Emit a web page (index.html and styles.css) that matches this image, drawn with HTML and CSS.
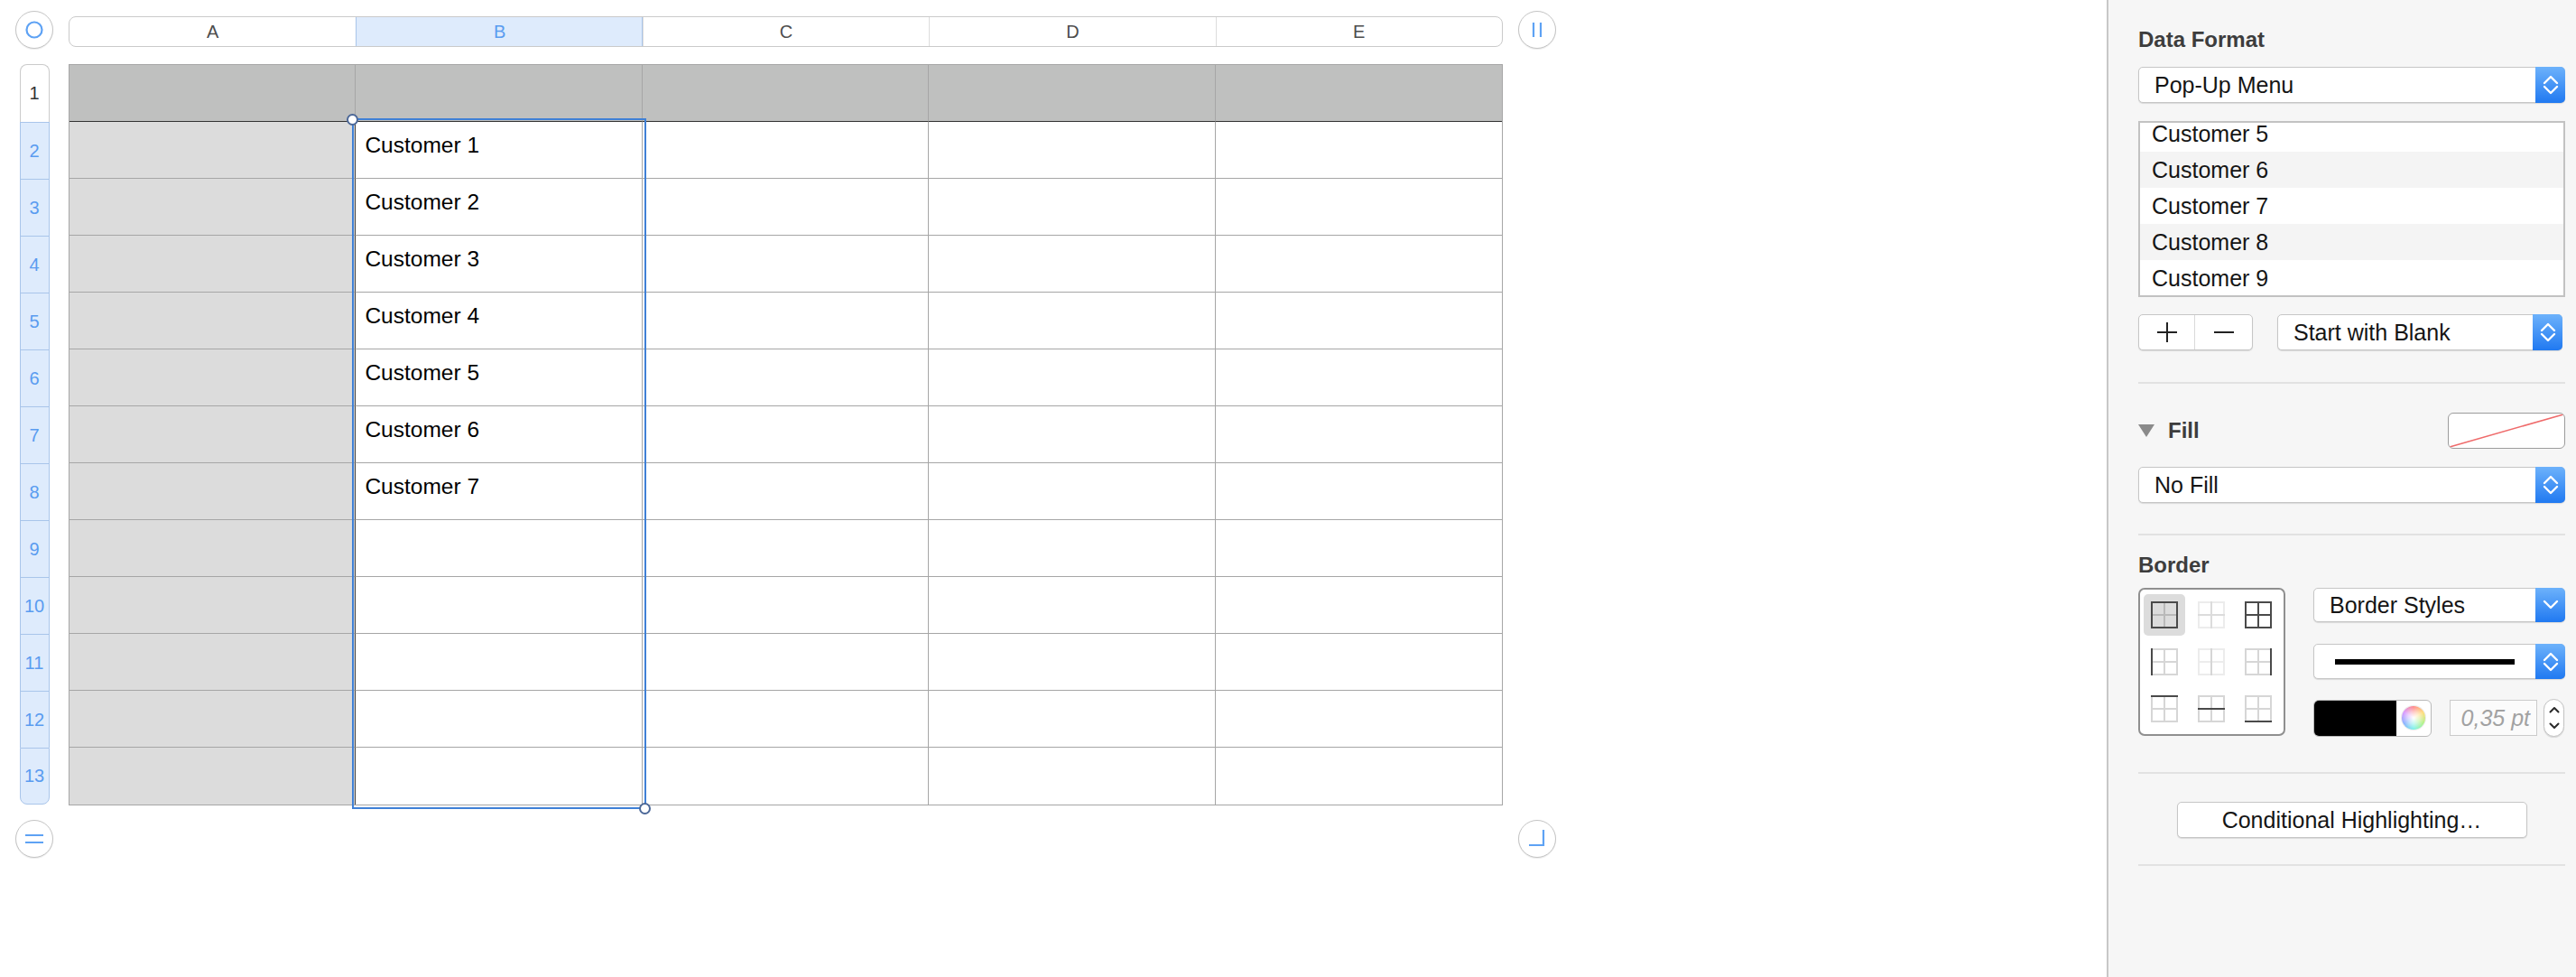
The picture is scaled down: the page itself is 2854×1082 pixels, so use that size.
FILE: index.html
```html
<!DOCTYPE html>
<html>
<head>
    <title>Numbers</title>
    <meta http-equiv="content-type" content="text/html; charset=UTF-8"/>
    <link rel="stylesheet" href="styles.css">
</head>
<body>
<div class="app">
    <div class="sheet">
        <div class="knob">
            <svg width="22" height="22" viewBox="0 0 22 22"><circle cx="11" cy="11" r="8.5" fill="none" stroke="#5ea2f4" stroke-width="2.2"/></svg>
        </div>
        <div class="col_bar">
            <span>A</span><span class="on">B</span><span>C</span><span>D</span><span>E</span>
        </div>
        <div class="knob">
            <svg width="12" height="18" viewBox="0 0 12 18"><path d="M2 1v16M10 1v16" stroke="#5ea2f4" stroke-width="2.2" fill="none"/></svg>
        </div>

        <div class="row_bar">
            <span class="first">1</span><span>2</span><span>3</span><span>4</span><span>5</span><span>6</span><span>7</span><span>8</span><span>9</span><span>10</span><span>11</span><span>12</span><span class="last">13</span>
        </div>
        <div class="table_wrap">
            <div class="table">
                <div class="h"></div><div class="h"></div><div class="h"></div><div class="h"></div><div class="h"></div>
                <div class="a"></div><div>Customer 1</div><div></div><div></div><div></div>
                <div class="a"></div><div>Customer 2</div><div></div><div></div><div></div>
                <div class="a"></div><div>Customer 3</div><div></div><div></div><div></div>
                <div class="a"></div><div>Customer 4</div><div></div><div></div><div></div>
                <div class="a"></div><div>Customer 5</div><div></div><div></div><div></div>
                <div class="a"></div><div>Customer 6</div><div></div><div></div><div></div>
                <div class="a"></div><div>Customer 7</div><div></div><div></div><div></div>
                <div class="a"></div><div></div><div></div><div></div><div></div>
                <div class="a"></div><div></div><div></div><div></div><div></div>
                <div class="a"></div><div></div><div></div><div></div><div></div>
                <div class="a"></div><div></div><div></div><div></div><div></div>
                <div class="a"></div><div></div><div></div><div></div><div></div>
            </div>
            <!-- selected range -->
            <div class="selection">
                <i class="handle tl"></i>
                <i class="handle br"></i>
            </div>
        </div>
        <div></div>

        <div class="knob">
            <svg width="22" height="12" viewBox="0 0 22 12"><path d="M1 2h20M1 10h20" stroke="#5ea2f4" stroke-width="2.2" fill="none"/></svg>
        </div>
        <div></div>
        <div class="knob">
            <svg width="20" height="20" viewBox="0 0 20 20"><path d="M17 0V17H1" stroke="#5ea2f4" stroke-width="2.2" fill="none"/></svg>
        </div>
    </div>

    <div class="inspector">
        <h3 class="title">Data Format</h3>
        <div class="popup top_popup">
            <span>Pop-Up Menu</span>
            <i class="arrows"><svg width="20" height="24" viewBox="0 0 20 24"><path d="M3 10l7-7 7 7M3 14l7 7 7-7" fill="none" stroke="#fff" stroke-width="2.4" stroke-linecap="round" stroke-linejoin="round"/></svg></i>
        </div>
        <div class="list">
            <div class="item cut">Customer 5</div>
            <div class="item odd">Customer 6</div>
            <div class="item">Customer 7</div>
            <div class="item odd">Customer 8</div>
            <div class="item">Customer 9</div>
        </div>
        <div class="list_tools">
            <div class="plus_minus">
                <span><svg width="22" height="22" viewBox="0 0 22 22"><path d="M11 0v22M0 11h22" stroke="#222" stroke-width="2" fill="none"/></svg></span>
                <span><svg width="22" height="22" viewBox="0 0 22 22"><path d="M0 11h22" stroke="#222" stroke-width="2" fill="none"/></svg></span>
            </div>
            <div class="popup blank_popup">
                <span>Start with Blank</span>
                <i class="arrows"><svg width="20" height="24" viewBox="0 0 20 24"><path d="M3 10l7-7 7 7M3 14l7 7 7-7" fill="none" stroke="#fff" stroke-width="2.4" stroke-linecap="round" stroke-linejoin="round"/></svg></i>
            </div>
        </div>

        <div class="sep sep_1"></div>

        <div class="fill_row">
            <i class="disclosure"></i>
            <h3>Fill</h3>
            <div class="swatch">
                <svg width="100%" height="100%" viewBox="0 0 130 40" preserveAspectRatio="none"><path d="M1 39L129 1" stroke="#ef6b6b" stroke-width="1.6" fill="none"/></svg>
            </div>
        </div>
        <div class="popup fill_popup">
            <span>No Fill</span>
            <i class="arrows"><svg width="20" height="24" viewBox="0 0 20 24"><path d="M3 10l7-7 7 7M3 14l7 7 7-7" fill="none" stroke="#fff" stroke-width="2.4" stroke-linecap="round" stroke-linejoin="round"/></svg></i>
        </div>

        <div class="sep sep_2"></div>

        <h3 class="title border_title">Border</h3>
        <div class="border_box">
            <div class="picker">
                <span class="sel"><svg width="30" height="30" viewBox="0 0 30 30"><path d="M15 0V30M0 15H30" stroke="#b9b9b9" stroke-width="2"/><path d="M0 1H30M0 29H30M1 0V30M29 0V30" stroke="#4a4a4a" stroke-width="2"/></svg></span>
                <span><svg width="30" height="30" viewBox="0 0 30 30"><path d="M0 1H30M0 29H30M1 0V30M29 0V30" stroke="#ececec" stroke-width="2"/><path d="M15 0V30M0 15H30" stroke="#dcdcdc" stroke-width="2"/></svg></span>
                <span><svg width="30" height="30" viewBox="0 0 30 30"><path d="M0 1H30M0 29H30M1 0V30M29 0V30M15 0V30M0 15H30" stroke="#4a4a4a" stroke-width="2"/></svg></span>
                <span><svg width="30" height="30" viewBox="0 0 30 30"><path d="M0 1H30M0 29H30M29 0V30M15 0V30M0 15H30" stroke="#d6d6d6" stroke-width="2"/><path d="M1 0V30" stroke="#4a4a4a" stroke-width="2"/></svg></span>
                <span><svg width="30" height="30" viewBox="0 0 30 30"><path d="M0 1H30M0 29H30M1 0V30M29 0V30M0 15H30" stroke="#ececec" stroke-width="2"/><path d="M15 0V30" stroke="#d6d6d6" stroke-width="2"/></svg></span>
                <span><svg width="30" height="30" viewBox="0 0 30 30"><path d="M0 1H30M0 29H30M1 0V30M15 0V30M0 15H30" stroke="#d6d6d6" stroke-width="2"/><path d="M29 0V30" stroke="#4a4a4a" stroke-width="2"/></svg></span>
                <span><svg width="30" height="30" viewBox="0 0 30 30"><path d="M0 29H30M1 0V30M29 0V30M15 0V30M0 15H30" stroke="#d6d6d6" stroke-width="2"/><path d="M0 1H30" stroke="#4a4a4a" stroke-width="2"/></svg></span>
                <span><svg width="30" height="30" viewBox="0 0 30 30"><path d="M0 1H30M0 29H30M1 0V30M29 0V30M15 0V30" stroke="#d6d6d6" stroke-width="2"/><path d="M0 15H30" stroke="#4a4a4a" stroke-width="2"/></svg></span>
                <span><svg width="30" height="30" viewBox="0 0 30 30"><path d="M0 1H30M1 0V30M29 0V30M15 0V30M0 15H30" stroke="#d6d6d6" stroke-width="2"/><path d="M0 29H30" stroke="#4a4a4a" stroke-width="2"/></svg></span>
            </div>
            <div class="border_ctrls">
                <div class="popup style_popup">
                    <span>Border Styles</span>
                    <i class="arrows"><svg width="20" height="14" viewBox="0 0 20 14"><path d="M3 3l7 7 7-7" fill="none" stroke="#fff" stroke-width="2.4" stroke-linecap="round" stroke-linejoin="round"/></svg></i>
                </div>
                <div class="popup line_popup">
                    <span><b class="stroke"></b></span>
                    <i class="arrows"><svg width="20" height="24" viewBox="0 0 20 24"><path d="M3 10l7-7 7 7M3 14l7 7 7-7" fill="none" stroke="#fff" stroke-width="2.4" stroke-linecap="round" stroke-linejoin="round"/></svg></i>
                </div>
                <div class="color_row">
                    <div class="well">
                        <b class="black"></b>
                        <span class="wheel_box"><i class="wheel"></i></span>
                    </div>
                    <div class="pt_field">0,35 pt</div>
                    <div class="stepper">
                        <svg width="12" height="28" viewBox="0 0 12 28"><path d="M1.5 7.5l4.5-4.5 4.5 4.5M1.5 20.5l4.5 4.5 4.5-4.5" fill="none" stroke="#2a2a2a" stroke-width="2" stroke-linecap="round" stroke-linejoin="round"/></svg>
                    </div>
                </div>
            </div>
        </div>

        <div class="sep sep_3"></div>

        <div class="btn_row">
            <div class="btn">Conditional Highlighting…</div>
        </div>

        <div class="sep sep_4"></div>
    </div>
</div>
</body>
</html>
```

FILE: styles.css
```css
*{
    box-sizing: border-box;
}
html,body{
    margin: 0;
    padding: 0;
    height: 100%;
    overflow: hidden;
    background: #fff;
    font-family: "Liberation Sans", Arial, sans-serif;
}
.app{
    display: flex;
    height: 100%;
}

/* sheet area */
.sheet{
    flex: 1;
    display: grid;
    grid-template-columns: 42px 1589px 42px;
    grid-template-rows: 42px 820px 42px;
    column-gap: 17px;
    row-gap: 17px;
    padding: 12px 0 0 17px;
    align-content: start;
}
.knob{
    width: 42px;
    height: 42px;
    border-radius: 50%;
    border: 1.5px solid #c4c4c4;
    background: #fff;
    box-shadow: 0 1px 1px rgba(0,0,0,0.08);
    display: flex;
    align-items: center;
    justify-content: center;
}
.col_bar{
    align-self: end;
    margin-bottom: 2px;
    height: 34px;
    display: grid;
    grid-template-columns: repeat(5, 1fr);
    border: 1px solid #cacaca;
    border-radius: 8px;
    overflow: hidden;
    background: #fff;
}
.col_bar span{
    display: flex;
    align-items: center;
    justify-content: center;
    font-size: 20px;
    color: #4d4d4d;
    border-left: 1px solid #dcdcdc;
}
.col_bar span:first-child{
    border-left: 0;
}
.col_bar .on{
    background: #deebfc;
    color: #5a9cf0;
    border-left-color: #a9c5ea;
    box-shadow: inset -1px 0 #a9c5ea;
}
.row_bar{
    width: 33px;
    justify-self: center;
    display: flex;
    flex-direction: column;
}
.row_bar span{
    height: 63px;
    display: flex;
    align-items: center;
    justify-content: center;
    font-size: 20px;
    color: #5a9cf0;
    background: #deebfc;
    border: 1px solid #a9c5ea;
    border-bottom: 0;
}
.row_bar .first{
    height: 64px;
    background: #fff;
    color: #333;
    border-color: #cbcbcb;
    border-radius: 8px 8px 0 0;
}
.row_bar .last{
    border-bottom: 1px solid #a9c5ea;
    border-radius: 0 0 8px 8px;
}
.table_wrap{
    position: relative;
}
.table{
    display: grid;
    grid-template-columns: repeat(5, 1fr);
    grid-template-rows: 63px repeat(12, 63px);
    border: 1px solid #a6a6a6;
}
.table div{
    border-right: 1px solid #a6a6a6;
    border-bottom: 1px solid #a6a6a6;
    padding: 11px 0 0 10px;
    font-size: 24.5px;
    line-height: 30px;
    color: #000;
}
.table div:nth-child(5n){
    border-right: 0;
}
.table div:nth-last-child(-n+5){
    border-bottom: 0;
}
.table .h{
    background: #bfc0bf;
    border-bottom-color: #333;
}
.table .a{
    background: #dcdcdc;
    border-right-color: #3a3a3a;
}
.selection{
    position: absolute;
    left: 313.5px;
    top: 60px;
    width: 326px;
    height: 765px;
    border: 2px solid #3f80d6;
}
.handle{
    position: absolute;
    width: 13px;
    height: 13px;
    border-radius: 50%;
    border: 2px solid #4c6898;
    background: #fff;
}
.handle.tl{
    left: -7.5px;
    top: -7.5px;
}
.handle.br{
    right: -7.5px;
    bottom: -7.5px;
}

/* inspector */
.inspector{
    width: 520px;
    flex: none;
    background: #f6f6f6;
    border-left: 2px solid #c8c8c8;
    padding: 29px 12px 0 33px;
    font-size: 25px;
    color: #151515;
}
.inspector h3{
    margin: 0;
    font-size: 24px;
    line-height: 30px;
    font-weight: bold;
    color: #3d3d3d;
}
.popup{
    display: flex;
    align-items: stretch;
    height: 40px;
    background: #fff;
    border: 1px solid #c6c6c6;
    border-radius: 5px;
    box-shadow: 0 1px 1px rgba(0,0,0,0.12);
}
.popup>span{
    flex: 1;
    display: flex;
    align-items: center;
    padding-left: 17px;
    white-space: nowrap;
}
.popup .arrows{
    width: 33px;
    margin: -1px -1px -1px 0;
    border-radius: 0 5px 5px 0;
    background: linear-gradient(#6db2fb, #2079f1);
    display: flex;
    align-items: center;
    justify-content: center;
}
.top_popup{
    margin-top: 15px;
}
.list{
    margin-top: 20px;
    height: 195px;
    border: 2px solid #c2c2c2;
    background: #fff;
    overflow: hidden;
}
.list .item{
    height: 40px;
    line-height: 40px;
    padding-left: 13px;
}
.list .cut{
    margin-top: -8px;
}
.list .odd{
    background: #f4f4f4;
}
.list_tools{
    margin-top: 19px;
    display: flex;
    gap: 27px;
}
.plus_minus{
    width: 127px;
    height: 40px;
    display: flex;
    background: #fff;
    border: 1px solid #c6c6c6;
    border-radius: 5px;
    box-shadow: 0 1px 1px rgba(0,0,0,0.12);
}
.plus_minus span{
    flex: 1;
    display: flex;
    align-items: center;
    justify-content: center;
}
.plus_minus span:first-child{
    flex: none;
    width: 62px;
    border-right: 1px solid #d9d9d9;
}
.blank_popup{
    width: 316px;
}
.sep{
    height: 2px;
    background: #e2e2e2;
}
.sep_1{
    margin-top: 35px;
}
.fill_row{
    margin-top: 32px;
    height: 40px;
    display: flex;
    align-items: center;
}
.disclosure{
    width: 0;
    height: 0;
    border-left: 9px solid transparent;
    border-right: 9px solid transparent;
    border-top: 14px solid #8a8a8a;
    margin-right: 15px;
}
.swatch{
    margin-left: auto;
    width: 130px;
    height: 40px;
    background: #fff;
    border: 1px solid #9c9c9c;
    border-radius: 6px;
    overflow: hidden;
}
.swatch svg{
    display: block;
}
.fill_popup{
    margin-top: 20px;
}
.sep_2{
    margin-top: 34px;
}
.border_title{
    margin-top: 18px !important;
}
.border_box{
    margin-top: 10px;
    display: flex;
    gap: 31px;
}
.picker{
    width: 163px;
    height: 164px;
    padding: 2px 1px;
    border: 2px solid #8f8f8f;
    border-radius: 7px;
    background: #fff;
    display: grid;
    grid-template-columns: repeat(3, 52px);
    grid-template-rows: repeat(3, 52px);
}
.picker span{
    display: flex;
    align-items: center;
    justify-content: center;
}
.picker svg{
    display: block;
}
.picker .sel{
    margin: 3px;
    border-radius: 5px;
    background: #dcdcdc;
}
.border_ctrls{
    width: 279px;
}
.style_popup{
    height: 38px;
}
.line_popup{
    margin-top: 24px;
    height: 39px;
}
.line_popup>span{
    padding-left: 23px;
}
.stroke{
    display: block;
    width: 199px;
    height: 6px;
    background: #000;
}
.color_row{
    margin-top: 22px;
    display: flex;
    align-items: center;
}
.well{
    width: 131px;
    height: 41px;
    display: flex;
    border: 1px solid #b9b9b9;
    border-radius: 6px;
    overflow: hidden;
    background: #fff;
}
.well .black{
    width: 91px;
    background: #000;
}
.wheel_box{
    flex: 1;
    display: flex;
    align-items: center;
    justify-content: center;
}
.wheel{
    width: 26px;
    height: 26px;
    border-radius: 50%;
    background: radial-gradient(circle, #fff 0, rgba(255,255,255,0.6) 35%, rgba(255,255,255,0) 75%),
        conic-gradient(#ff7b7b, #ffd86a, #a6f07a, #6ef0e6, #7aa6ff, #d48cff, #ff7b7b);
    box-shadow: 0 0 0 1px rgba(0,0,0,0.08);
}
.pt_field{
    margin-left: 20px;
    width: 97px;
    height: 40px;
    border: 1px solid #cbcbcb;
    background: #fbfbfb;
    font-style: italic;
    color: #a2a2a2;
    text-align: right;
    padding-right: 7px;
    line-height: 38px;
}
.stepper{
    margin-left: 7px;
    width: 23px;
    height: 42px;
    border: 1px solid #c3c3c3;
    border-radius: 12px;
    background: #fff;
    box-shadow: 0 1px 1px rgba(0,0,0,0.12);
    display: flex;
    align-items: center;
    justify-content: center;
}
.sep_3{
    margin-top: 39px;
}
.btn_row{
    margin-top: 31px;
    display: flex;
    justify-content: center;
}
.btn{
    width: 388px;
    height: 40px;
    line-height: 38px;
    text-align: center;
    background: #fff;
    border: 1px solid #c6c6c6;
    border-radius: 5px;
    box-shadow: 0 1px 1px rgba(0,0,0,0.12);
}
.sep_4{
    margin-top: 29px;
}
```
